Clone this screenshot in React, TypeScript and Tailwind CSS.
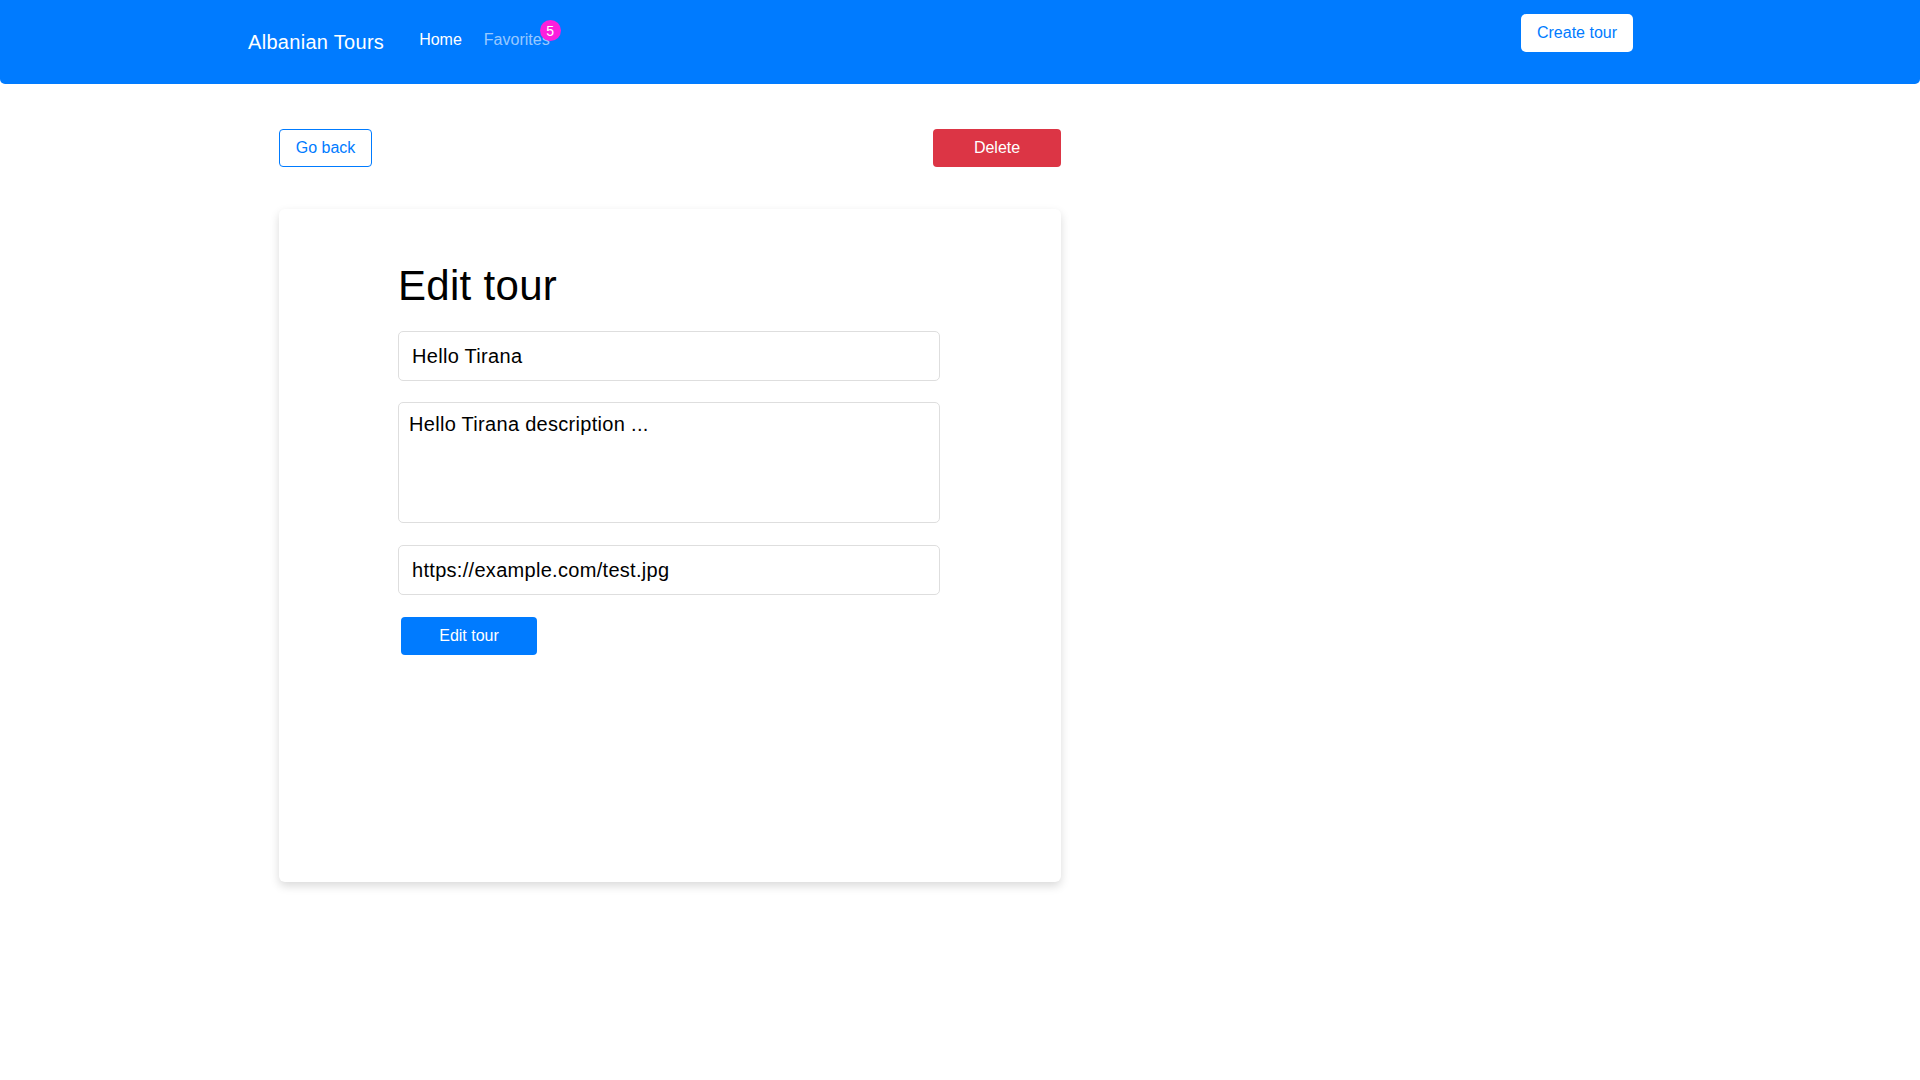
export default function App() {
  return (
    <div className="min-h-[1080px] bg-white font-['Liberation_Sans',Arial,sans-serif]">
      <nav className="flex h-[84px] items-start rounded-b-[5px] bg-[#007bff] pl-[248px] pr-[287px]">
        <a className="mt-[27px] text-[20px] leading-[30px] tracking-[0.3px] text-white">Albanian Tours</a>
        <a className="ml-[35px] mt-[28px] text-[16px] leading-[24px] text-white">Home</a>
        <a className="relative ml-[22px] mt-[28px] text-[16px] leading-[24px] text-white/60">
          Favorites
          <span className="absolute right-[-11px] top-[-8px] flex h-[21px] w-[21px] items-center justify-center rounded-full bg-[#fc1fdc] text-[14px] leading-none text-white">
            5
          </span>
        </a>
        <button className="ml-auto mt-[14px] h-[38px] w-[112px] rounded-[5px] bg-white text-[16px] text-[#007bff]">
          Create tour
        </button>
      </nav>

      <main className="pl-[279px] pt-[45px]">
        <div className="flex w-[782px] items-center justify-between">
          <button className="h-[38px] w-[93px] rounded-[4px] border border-[#007bff] text-[16px] text-[#007bff]">
            Go back
          </button>
          <button className="h-[38px] w-[128px] rounded-[4px] bg-[#dc3545] text-[16px] text-white">
            Delete
          </button>
        </div>

        <div className="mt-[42px] h-[673px] w-[782px] rounded-[6px] bg-white px-[119px] pt-[54px] shadow-[0_4px_10px_rgba(0,0,0,0.15)]">
          <h1 className="text-[42px] leading-[46px] font-normal tracking-[0.3px] text-black">Edit tour</h1>
          <input
            readOnly
            value="Hello Tirana"
            className="mt-[22px] block h-[50px] w-[542px] rounded-[5px] border border-[#dedede] px-[13px] text-[20px] tracking-[0.3px] text-black outline-none"
          />
          <textarea
            readOnly
            value="Hello Tirana description ..."
            className="mt-[21px] block h-[121px] w-[542px] resize-none rounded-[5px] border border-[#dedede] px-[10px] pt-[7px] text-[20px] leading-[28px] tracking-[0.3px] text-black outline-none"
          />
          <input
            readOnly
            value="https://example.com/test.jpg"
            className="mt-[22px] block h-[50px] w-[542px] rounded-[5px] border border-[#dedede] px-[13px] text-[20px] tracking-[0.3px] text-black outline-none"
          />
          <button className="ml-[3px] mt-[22px] h-[38px] w-[136px] rounded-[4px] bg-[#007bff] text-[16px] text-white">
            Edit tour
          </button>
        </div>
      </main>
    </div>
  );
}
